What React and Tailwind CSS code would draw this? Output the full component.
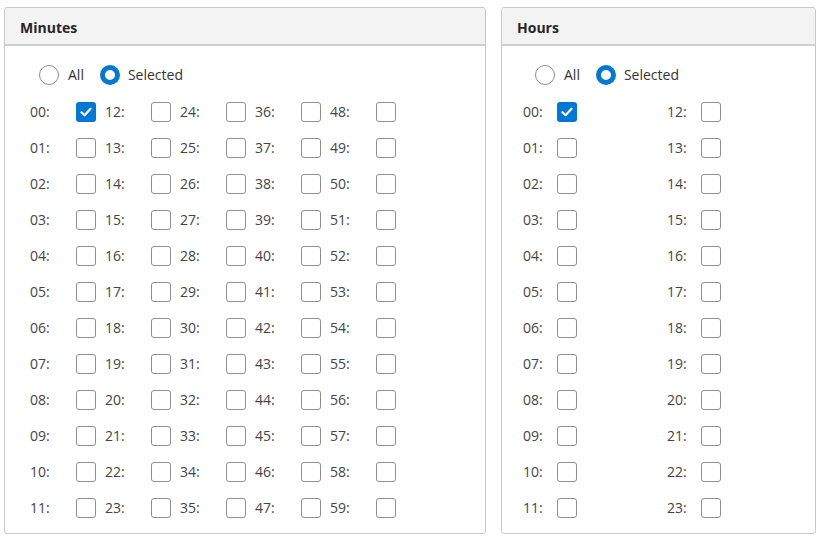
import React from "react";

const pad = (n) => String(n).padStart(2, "0");

function Check({ checked }) {
  if (checked) {
    return (
      <div className="w-[20px] h-[20px] rounded-[3px] bg-[#0078d4] flex items-center justify-center">
        <svg width="12" height="10" viewBox="0 0 12 10">
          <path d="M1.5 5.2 L4.6 8.2 L10.5 1.8" fill="none" stroke="white" strokeWidth="2.2" strokeLinecap="round" strokeLinejoin="round" />
        </svg>
      </div>
    );
  }
  return <div className="w-[20px] h-[20px] rounded-[3px] border border-[#8f8f8f] bg-white box-border" />;
}

function Radios({ pl }) {
  return (
    <div className={`flex items-center h-[20px] ${pl}`}>
      <div className="w-[20px] h-[20px] rounded-full border border-[#8f8f8f] box-border" />
      <span className="ml-[9px] text-[14px] text-[#333] pb-[1px]">All</span>
      <div className="ml-[16px] w-[20px] h-[20px] rounded-full border-[5px] border-[#0078d4] box-border bg-white" />
      <span className="ml-[8px] text-[14px] text-[#333] pb-[1px]">Selected</span>
    </div>
  );
}

function Panel({ title, width, children }) {
  return (
    <div className={`${width} h-[527px] border border-[#c8c8c8] rounded-[3px] bg-white flex flex-col box-border`}>
      <div className="h-[38px] bg-[#f3f3f3] border-b-2 border-[#d0d0d0] flex items-center pl-[15px] pt-[2px] rounded-t-[3px]">
        <span className="font-bold text-[14px] text-[#262626]">{title}</span>
      </div>
      {children}
    </div>
  );
}

export default function App() {
  const rows = Array.from({ length: 12 }, (_, r) => r);
  return (
    <div
      className="w-[825px] h-[542px] bg-white flex pt-[7px] pl-[4px] gap-[15px]"
      style={{ fontFamily: '"Open Sans", "Noto Sans", sans-serif' }}
    >
      <Panel title="Minutes" width="w-[482px]">
        <div className="pt-[19px]">
          <Radios pl="pl-[34px]" />
          <div className="mt-[9px] pl-[25px]">
            {rows.map((r) => (
              <div key={r} className="h-[36px] grid grid-cols-[46px_29px_46px_29px_46px_29px_46px_29px_46px_29px] items-center">
                {[0, 1, 2, 3, 4].map((c) => {
                  const n = r + c * 12;
                  return (
                    <React.Fragment key={c}>
                      <span className="text-[14px] text-[#444] pb-[2px]">{pad(n)}:</span>
                      <Check checked={n === 0} />
                    </React.Fragment>
                  );
                })}
              </div>
            ))}
          </div>
        </div>
      </Panel>
      <Panel title="Hours" width="w-[315px]">
        <div className="pt-[19px]">
          <Radios pl="pl-[33px]" />
          <div className="mt-[9px] pl-[21px]">
            {rows.map((r) => (
              <div key={r} className="h-[36px] grid grid-cols-[34px_110px_34px_110px] items-center">
                {[0, 1].map((c) => {
                  const n = r + c * 12;
                  return (
                    <React.Fragment key={c}>
                      <span className="text-[14px] text-[#444] pb-[2px]">{pad(n)}:</span>
                      <Check checked={n === 0} />
                    </React.Fragment>
                  );
                })}
              </div>
            ))}
          </div>
        </div>
      </Panel>
    </div>
  );
}
